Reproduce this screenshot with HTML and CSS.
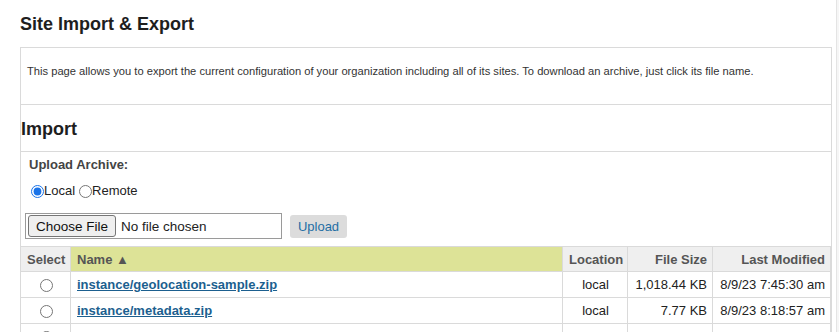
FILE: index.html
```html
<!DOCTYPE html>
<html>
<head>
<meta charset="utf-8">
<link rel="stylesheet" href="styles.css">
</head>
<body>
<div class="page">
  <h1 class="title">Site Import &amp; Export</h1>
  <div class="panel">
    <div class="section desc">
      <p>This page allows you to export the current configuration of your organization including all of its sites. To download an archive, just click its file name.</p>
    </div>
    <div class="section import-head">
      <h2>Import</h2>
    </div>
    <div class="upload">
      <div class="upload-label">Upload Archive:</div>
      <div class="radios">
        <label class="radio"><input type="radio" name="src" checked>Local</label>
        <label class="radio"><input type="radio" name="src">Remote</label>
      </div>
      <div class="file-row">
        <input class="file" type="file">
        <button class="upload-btn" type="button">Upload</button>
      </div>
    </div>
    <table class="files">
      <colgroup>
        <col class="c-select"><col class="c-name"><col class="c-loc"><col class="c-size"><col class="c-mod">
      </colgroup>
      <thead>
        <tr>
          <th class="center">Select</th>
          <th class="left sorted">Name ▲</th>
          <th class="center">Location</th>
          <th class="right">File Size</th>
          <th class="right">Last Modified</th>
        </tr>
      </thead>
      <tbody>
        <tr>
          <td class="center"><input type="radio" name="pick"></td>
          <td class="left"><a href="#">instance/geolocation-sample.zip</a></td>
          <td class="center">local</td>
          <td class="right">1,018.44 KB</td>
          <td class="right">8/9/23 7:45:30 am</td>
        </tr>
        <tr>
          <td class="center"><input type="radio" name="pick"></td>
          <td class="left"><a href="#">instance/metadata.zip</a></td>
          <td class="center">local</td>
          <td class="right">7.77 KB</td>
          <td class="right">8/9/23 8:18:57 am</td>
        </tr>
        <tr>
          <td class="center"><input type="radio" name="pick"></td>
          <td class="left">&nbsp;</td>
          <td class="center">&nbsp;</td>
          <td class="right">&nbsp;</td>
          <td class="right">&nbsp;</td>
        </tr>
      </tbody>
    </table>
  </div>
</div>
<div class="scrollbar"></div>
</body>
</html>
```
FILE: styles.css
```css
html, body {
  margin: 0;
  padding: 0;
  overflow: hidden;
  background: #fff;
}
body {
  font-family: "Liberation Sans", Arial, sans-serif;
  color: #222;
}
.page {
  padding: 0 0 0 20px;
  width: 812px;
}
.title {
  margin: 0;
  padding-top: 13px;
  height: 47px;
  box-sizing: border-box;
  font-size: 18px;
  line-height: 22px;
  font-weight: bold;
  color: #1e1e1e;
}
.panel {
  border: 1px solid #dadada;
  border-bottom: none;
}
.section {
  border-bottom: 1px solid #dadada;
}
.desc {
  height: 56px;
  box-sizing: content-box;
}
.desc p {
  margin: 0;
  padding: 17px 6px 0 6px;
  font-size: 11.17px;
  line-height: 13px;
  color: #333;
}
.import-head {
  height: 47px;
  box-sizing: border-box;
  padding-top: 13px;
}
.import-head h2 {
  margin: 0;
  font-size: 18px;
  line-height: 22px;
  font-weight: bold;
  color: #1e1e1e;
}
.upload {
  padding: 5px 0 7px 8px;
}
.upload-label {
  font-size: 13px;
  line-height: 16px;
  font-weight: bold;
  color: #444;
}
.radios {
  margin-top: 10px;
  display: flex;
  gap: 2px;
  font-size: 13px;
  line-height: 16px;
  color: #222;
}
.radio {
  display: flex;
  align-items: center;
}
.radio input {
  margin: 0 0 0 2px;
  width: 13px;
  height: 13px;
  accent-color: #1a73e8;
}
.file-row {
  margin-top: 14px;
  margin-left: -4px;
  display: flex;
  align-items: center;
  gap: 8px;
  height: 26px;
}
.file {
  width: 257px;
  height: 26px;
  box-sizing: border-box;
  border: 1px solid #9a9a9a;
  padding: 1px 2px;
  font-family: "Liberation Sans", Arial, sans-serif;
  font-size: 13.5px;
  color: #222;
}
.file::file-selector-button {
  font-family: "Liberation Sans", Arial, sans-serif;
  font-size: 13.5px;
  height: 22px;
  padding: 0 7px;
  margin-right: 5px;
  background: #efefef;
  border: 1px solid #767676;
  border-radius: 3px;
  color: #111;
}
.upload-btn {
  width: 57px;
  height: 23px;
  border: none;
  border-radius: 3px;
  background: #dcdcdc;
  color: #1f6ea4;
  font-family: "Liberation Sans", Arial, sans-serif;
  font-size: 13px;
  padding: 0;
}
.files {
  border-collapse: collapse;
  width: 810px;
  margin-left: -1px;
  table-layout: fixed;
  font-size: 13px;
}
.c-select { width: 50px; }
.c-name { width: 492px; }
.c-loc { width: 65px; }
.c-size { width: 85px; }
.c-mod { width: 118px; }
.files th, .files td {
  border: 1px solid #dadada;
  padding: 0 5px 0 6px;
  white-space: nowrap;
  overflow: hidden;
}
.files th {
  height: 24px;
  background: #efefef;
  color: #555;
  font-weight: bold;
}
.files th.sorted {
  background: #dde397;
}
.files td {
  height: 25px;
  color: #222;
}
.files td input {
  margin: 0;
  width: 13px;
  height: 13px;
  vertical-align: middle;
}
.left { text-align: left; }
.center { text-align: center; }
.right { text-align: right; }
.files a {
  color: #1c5f8f;
  font-weight: bold;
  text-decoration: underline;
}
.scrollbar {
  position: fixed;
  top: 0;
  right: 0;
  width: 2px;
  height: 100%;
  background: #f6f6f6;
  border-left: 1px solid #e4e4e4;
}
```
